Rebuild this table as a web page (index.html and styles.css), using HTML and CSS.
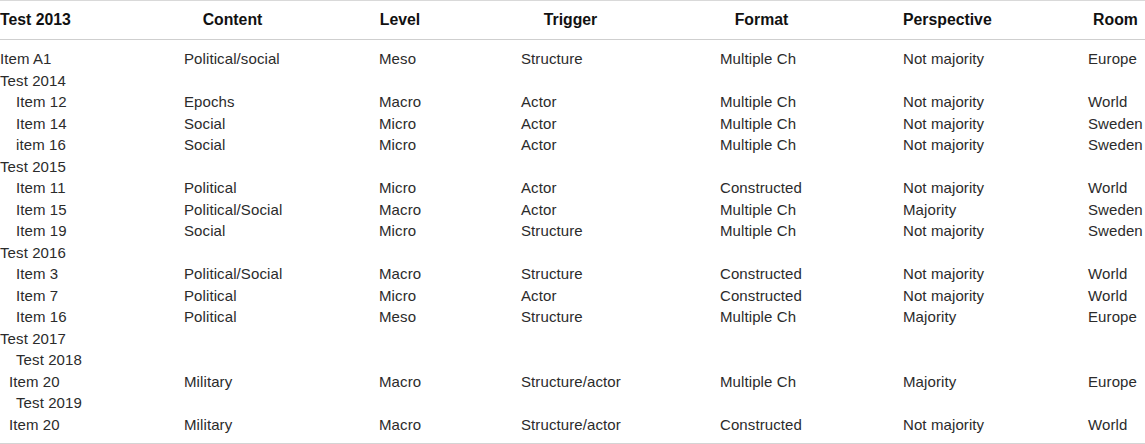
FILE: index.html
```html
<!DOCTYPE html>
<html>
<head>
<meta charset="utf-8">
<link rel="stylesheet" href="styles.css">
</head>
<body>
<table class="data">
  <colgroup>
    <col class="w1"><col class="w2"><col class="w3"><col class="w4"><col class="w5"><col class="w6"><col class="w7">
  </colgroup>
  <thead>
    <tr>
      <th class="h1">Test 2013</th>
      <th class="h2">Content</th>
      <th class="h3">Level</th>
      <th class="h4">Trigger</th>
      <th class="h5">Format</th>
      <th class="h6">Perspective</th>
      <th class="h7">Room</th>
    </tr>
  </thead>
  <tbody>
    <tr><td>Item A1</td><td>Political/social</td><td>Meso</td><td>Structure</td><td>Multiple Ch</td><td>Not majority</td><td>Europe</td></tr>
    <tr><td>Test 2014</td><td></td><td></td><td></td><td></td><td></td><td></td></tr>
    <tr><td class="ind">Item 12</td><td>Epochs</td><td>Macro</td><td>Actor</td><td>Multiple Ch</td><td>Not majority</td><td>World</td></tr>
    <tr><td class="ind">Item 14</td><td>Social</td><td>Micro</td><td>Actor</td><td>Multiple Ch</td><td>Not majority</td><td>Sweden</td></tr>
    <tr><td class="ind">item 16</td><td>Social</td><td>Micro</td><td>Actor</td><td>Multiple Ch</td><td>Not majority</td><td>Sweden</td></tr>
    <tr><td>Test 2015</td><td></td><td></td><td></td><td></td><td></td><td></td></tr>
    <tr><td class="ind">Item 11</td><td>Political</td><td>Micro</td><td>Actor</td><td>Constructed</td><td>Not majority</td><td>World</td></tr>
    <tr><td class="ind">Item 15</td><td>Political/Social</td><td>Macro</td><td>Actor</td><td>Multiple Ch</td><td>Majority</td><td>Sweden</td></tr>
    <tr><td class="ind">Item 19</td><td>Social</td><td>Micro</td><td>Structure</td><td>Multiple Ch</td><td>Not majority</td><td>Sweden</td></tr>
    <tr><td>Test 2016</td><td></td><td></td><td></td><td></td><td></td><td></td></tr>
    <tr><td class="ind">Item 3</td><td>Political/Social</td><td>Macro</td><td>Structure</td><td>Constructed</td><td>Not majority</td><td>World</td></tr>
    <tr><td class="ind">Item 7</td><td>Political</td><td>Micro</td><td>Actor</td><td>Constructed</td><td>Not majority</td><td>World</td></tr>
    <tr><td class="ind">Item 16</td><td>Political</td><td>Meso</td><td>Structure</td><td>Multiple Ch</td><td>Majority</td><td>Europe</td></tr>
    <tr><td>Test 2017</td><td></td><td></td><td></td><td></td><td></td><td></td></tr>
    <tr><td class="ind">Test 2018</td><td></td><td></td><td></td><td></td><td></td><td></td></tr>
    <tr><td class="ind2">Item 20</td><td>Military</td><td>Macro</td><td>Structure/actor</td><td>Multiple Ch</td><td>Majority</td><td>Europe</td></tr>
    <tr><td class="ind">Test 2019</td><td></td><td></td><td></td><td></td><td></td><td></td></tr>
    <tr><td class="ind2">Item 20</td><td>Military</td><td>Macro</td><td>Structure/actor</td><td>Constructed</td><td>Not majority</td><td>World</td></tr>
  </tbody>
</table>
</body>
</html>
```

FILE: styles.css
```css
html, body {
  margin: 0;
  padding: 0;
  background: #ffffff;
  overflow: hidden;
}

.data {
  table-layout: fixed;
  width: 1145px;
  border-collapse: separate;
  border-spacing: 0;
  font-family: "Liberation Sans", Arial, sans-serif;
  font-size: 15px;
  color: #2b2b2b;
}

.w1 { width: 184px; }
.w2 { width: 195px; }
.w3 { width: 142px; }
.w4 { width: 199px; }
.w5 { width: 183px; }
.w6 { width: 185px; }
.w7 { width: 57px; }

.data th {
  font-weight: bold;
  font-size: 15.8px;
  color: #111111;
  line-height: 20px;
  padding: 9px 0;
  text-align: center;
  white-space: nowrap;
  border-top: 1px solid #d9d9d9;
  border-bottom: 1px solid #cfcfcf;
}

.data th.h1 { padding-right: 112px; text-align: left; }
.data th.h2 { padding-right: 98px; }
.data th.h3 { padding-right: 100px; }
.data th.h4 { padding-right: 100px; }
.data th.h5 { padding-right: 100px; }
.data th.h6 { padding-right: 97px; }
.data th.h7 { padding-right: 2px; }

.data td {
  padding: 0;
  line-height: 21.5px;
  height: 21.5px;
  text-align: left;
  white-space: nowrap;
  vertical-align: middle;
  letter-spacing: 0.1px;
}

.data tbody tr:first-child td { padding-top: 8px; }
.data tbody tr:last-child td {
  padding-bottom: 8px;
  border-bottom: 1px solid #d4d4d4;
}

.data td.ind { padding-left: 16px; }
.data td.ind2 { padding-left: 9px; }
```
